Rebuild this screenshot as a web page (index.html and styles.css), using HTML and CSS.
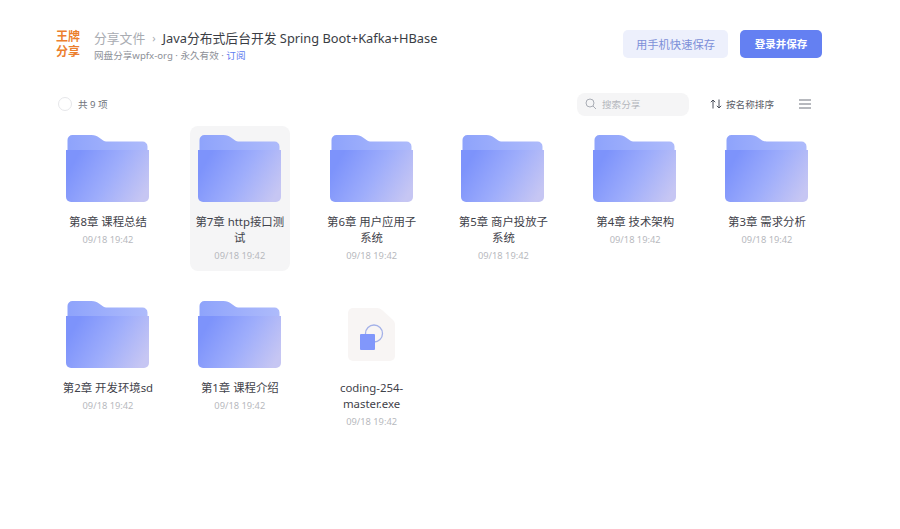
FILE: index.html
```html
<!DOCTYPE html>
<html lang="en">
<head>
    <meta charset="UTF-8">
    <meta name="viewport" content="width=device-width, initial-scale=1.0">
    <title>分享文件</title>
    <link rel="stylesheet" href="styles.css">
</head>
<body>
    <svg class="defs" width="0" height="0" aria-hidden="true">
        <defs>
            <linearGradient id="folder-back" x1="0" y1="0" x2="1" y2="0">
                <stop offset="0" stop-color="#8ea3fb"/>
                <stop offset="1" stop-color="#aebbfb"/>
            </linearGradient>
            <linearGradient id="folder-front" x1="0.05" y1="0.35" x2="1" y2="0.7">
                <stop offset="0" stop-color="#7d93fb"/>
                <stop offset="0.5" stop-color="#9eadfb"/>
                <stop offset="1" stop-color="#c6c6f3"/>
            </linearGradient>
            <symbol id="folder" viewBox="0 0 83 67">
                <path d="M1.500 5a5 5 0 0 1 5-5h19c3.500 0 5.500 1 7.500 2.500l3.500 2.500c1.500 1 3 1.500 5 1.500h35a5 5 0 0 1 5 5v8H1.500z" fill="url(#folder-back)"/>
                <path d="M0 15h83v47a5 5 0 0 1-5 5H5a5 5 0 0 1-5-5z" fill="url(#folder-front)"/>
            </symbol>
        </defs>
    </svg>

    <header class="top">
        <div class="logo">王牌<br>分享</div>
        <div class="title-block">
            <div class="crumbs">
                <span class="crumb-root">分享文件</span>
                <span class="crumb-sep">›</span>
                <span class="crumb-name">Java分布式后台开发 Spring Boot+Kafka+HBase</span>
            </div>
            <div class="meta">网盘分享wpfx-org · 永久有效 · <a href="#" class="link">订阅</a></div>
        </div>
        <div class="actions">
            <a href="#" class="btn btn-light">用手机快速保存</a>
            <a href="#" class="btn btn-primary">登录并保存</a>
        </div>
    </header>

    <div class="toolbar">
        <span class="check"></span>
        <span class="count">共 9 项</span>
        <div class="search">
            <svg width="12" height="12" viewBox="0 0 12 12" fill="none" stroke="#a9adb5" stroke-width="1">
                <circle cx="5" cy="5" r="4"/>
                <path d="M8 8l3 3"/>
            </svg>
            <span>搜索分享</span>
        </div>
        <div class="sort">
            <svg width="12" height="10" viewBox="0 0 12 10" fill="none" stroke="#4a4f5a" stroke-width="1">
                <path d="M3 9.500V1M.8 3.200L3 1l2.200 2.200M9 .5V9M6.800 6.800L9 9l2.200-2.200"/>
            </svg>
            <span>按名称排序</span>
        </div>
        <svg class="menu" width="12" height="10" viewBox="0 0 12 10" stroke="#6e737d" stroke-width="1">
            <path d="M0 1h12M0 5h12M0 9h12"/>
        </svg>
    </div>

    <main class="grid">
        <div class="item">
            <svg class="folder"><use href="#folder"/></svg>
            <div class="name">第8章 课程总结</div>
            <div class="date">09/18 19:42</div>
        </div>
        <div class="item item-active">
            <svg class="folder"><use href="#folder"/></svg>
            <div class="name">第7章 http接口测试</div>
            <div class="date">09/18 19:42</div>
        </div>
        <div class="item">
            <svg class="folder"><use href="#folder"/></svg>
            <div class="name">第6章 用户应用子系统</div>
            <div class="date">09/18 19:42</div>
        </div>
        <div class="item">
            <svg class="folder"><use href="#folder"/></svg>
            <div class="name">第5章 商户投放子系统</div>
            <div class="date">09/18 19:42</div>
        </div>
        <div class="item">
            <svg class="folder"><use href="#folder"/></svg>
            <div class="name">第4章 技术架构</div>
            <div class="date">09/18 19:42</div>
        </div>
        <div class="item">
            <svg class="folder"><use href="#folder"/></svg>
            <div class="name">第3章 需求分析</div>
            <div class="date">09/18 19:42</div>
        </div>
        <div class="item">
            <svg class="folder"><use href="#folder"/></svg>
            <div class="name">第2章 开发环境sd</div>
            <div class="date">09/18 19:42</div>
        </div>
        <div class="item">
            <svg class="folder"><use href="#folder"/></svg>
            <div class="name">第1章 课程介绍</div>
            <div class="date">09/18 19:42</div>
        </div>
        <div class="item">
            <svg class="folder" viewBox="0 0 83 67">
                <path d="M18 12a5 5 0 0 1 5-5h24c2 0 3.500 .7 5 2l11 10c1.300 1.300 2 3 2 5v31a5 5 0 0 1-5 5H23a5 5 0 0 1-5-5z" fill="#f8f5f4"/>
                <circle cx="44" cy="32.500" r="8.500" fill="none" stroke="#a4b1e8" stroke-width="1.300"/>
                <rect x="30" y="33" width="15" height="16" rx="1" fill="#8197fb"/>
            </svg>
            <div class="name">coding-254-master.exe</div>
            <div class="date">09/18 19:42</div>
        </div>
    </main>
</body>
</html>
```

FILE: styles.css
```css
/* General Body Styles */
body {
    margin: 0;
    padding: 0;
    height: 529px;
    overflow: hidden;
    font-family: "Noto Sans", "Noto Sans CJK SC", sans-serif;
    background: #ffffff;
    color: #31343b;
}

a {
    text-decoration: none;
}

.defs {
    display: block;
    height: 0;
}

/* Header */
.top {
    display: flex;
    align-items: center;
    height: 30px;
    padding: 29px 78px 0 56px;
}

.logo {
    width: 38px;
    margin-top: 1px;
    font-family: "Liberation Sans", "Noto Sans CJK SC", sans-serif;
    font-size: 12px;
    line-height: 15px;
    font-weight: bold;
    color: #ec7f2e;
}

.title-block {
    flex: 1;
    margin-top: 3px;
}

.crumbs {
    display: flex;
    align-items: center;
    gap: 7px;
    font-size: 12.8px;
    line-height: 16px;
}

.crumb-root {
    color: #a9acb2;
}

.crumb-sep {
    color: #a9acb2;
    font-size: 11px;
}

.crumb-name {
    color: #3a3d44;
}

.meta {
    margin-top: 3px;
    font-size: 9.6px;
    line-height: 13px;
    color: #8d9097;
}

.link {
    color: #5f7cf0;
}

.actions {
    display: flex;
    gap: 12px;
}

.btn {
    display: block;
    height: 28px;
    line-height: 29px;
    border-radius: 5px;
    text-align: center;
}

.btn-light {
    width: 105px;
    background: #edf0fc;
    color: #7c8fd8;
    font-size: 11.3px;
}

.btn-primary {
    width: 82px;
    background: #6480f2;
    color: #ffffff;
    font-size: 10.5px;
    font-weight: bold;
}

/* Toolbar */
.toolbar {
    display: flex;
    align-items: center;
    height: 24px;
    margin-top: 33px;
    padding: 0 89px 0 58px;
}

.check {
    width: 12px;
    height: 12px;
    border: 1px solid #e6e7ea;
    border-radius: 50%;
}

.count {
    flex: 1;
    margin-left: 6px;
    font-size: 9.6px;
    color: #70747c;
}

.search {
    display: flex;
    align-items: center;
    gap: 5px;
    width: 104px;
    height: 23px;
    padding-left: 8px;
    border-radius: 8px;
    background: #f5f5f6;
    font-size: 9.6px;
    color: #b4b7bd;
}

.sort {
    display: flex;
    align-items: center;
    gap: 4px;
    margin-left: 21px;
    font-size: 9.6px;
    color: #5c6068;
}

.menu {
    margin-left: 25px;
}

/* File Grid */
.grid {
    display: grid;
    grid-template-columns: repeat(6, 100px);
    column-gap: 31.8px;
    row-gap: 21px;
    grid-auto-rows: 145px;
    margin-top: 10px;
    padding-left: 58px;
}

.item {
    display: flex;
    flex-direction: column;
    align-items: center;
    padding: 9px 4px 0;
    border-radius: 8px;
    text-align: center;
}

.item-active {
    background: #f5f5f6;
}

.folder {
    flex: none;
    width: 83px;
    height: 67px;
    margin-left: -1px;
}

.name {
    margin-top: 12px;
    width: 100%;
    font-size: 11.4px;
    line-height: 16px;
    color: #3f424a;
}

.date {
    margin-top: 3px;
    font-size: 9.3px;
    line-height: 14px;
    color: #b7b9be;
}
```
